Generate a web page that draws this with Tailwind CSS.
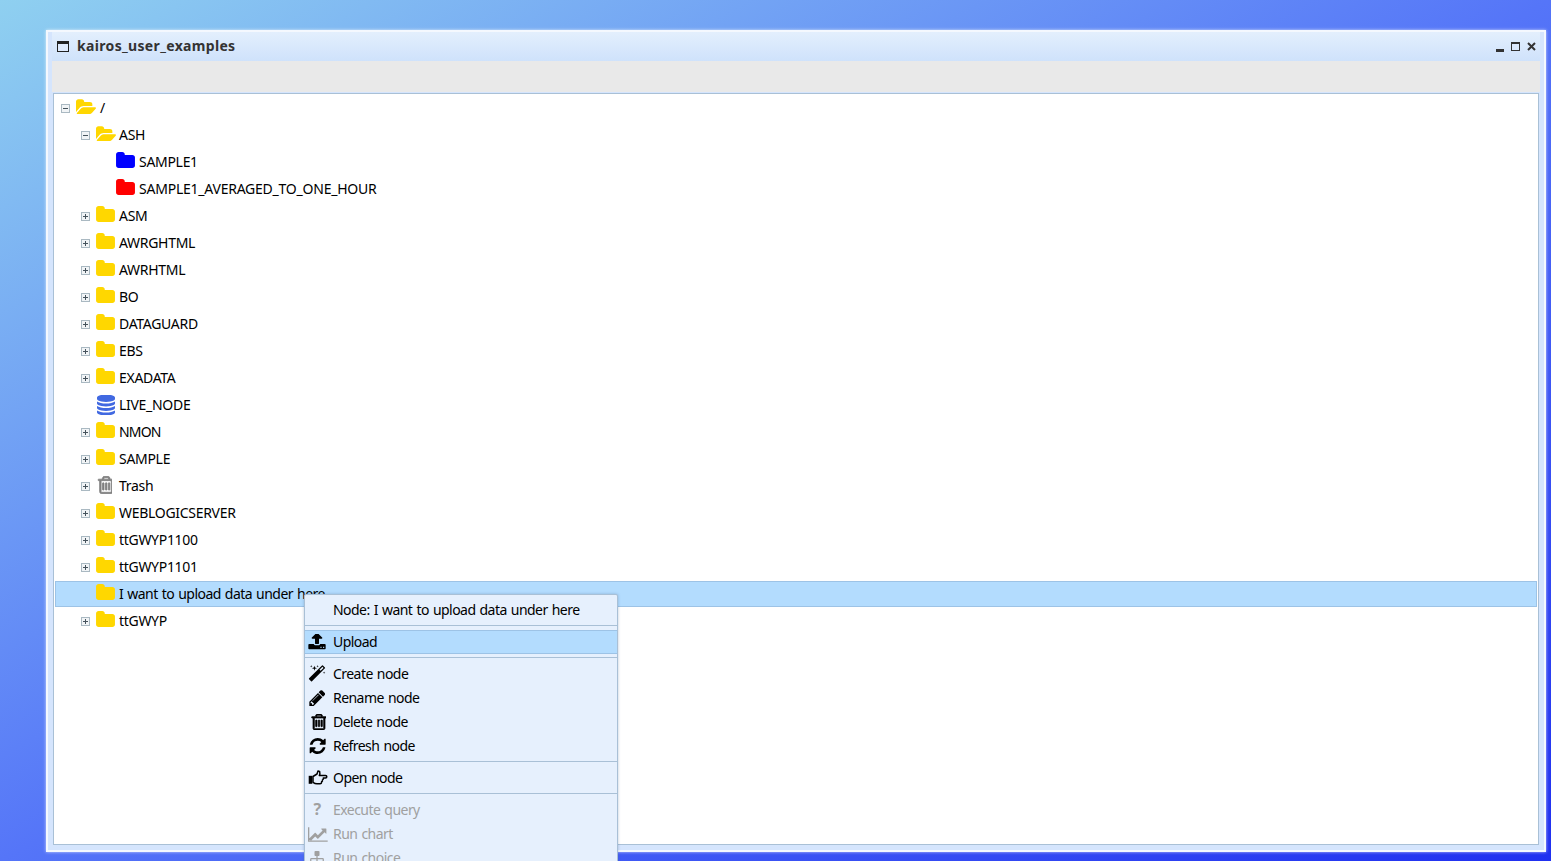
<!DOCTYPE html>
<html lang="en">
<head>
    <meta charset="UTF-8">
    <meta name="viewport" content="width=device-width, initial-scale=1.0">
    <script src="https://cdn.jsdelivr.net/npm/@tailwindcss/browser@4"></script>
    <title>kairos_user_examples</title>
</head>
<body class="h-screen overflow-hidden bg-[linear-gradient(to_bottom_right,#8fd0f0_0%,#5575f8_50%,#2030f0_100%)] font-['Noto_Sans',sans-serif] text-[14px] tracking-[-0.3px] text-black">

    <!-- Icon set -->
    <svg class="hidden">
        <symbol id="i-folder" viewBox="0 112 1664 1408"><path fill="currentColor" d="M1664 592v704q0 92-66 158t-158 66h-1216q-92 0-158-66t-66-158v-960q0-92 66-158t158-66h320q92 0 158 66t66 158v32h672q92 0 158 66t66 158z"/></symbol>
        <symbol id="i-folder-open" viewBox="0 112 1879 1408"><path fill="currentColor" d="M1879 952q0 31-31 66l-336 396q-43 51-120.5 86.5t-143.5 35.5h-1088q-34 0-60.5-13t-26.5-43q0-31 31-66l336-396q43-51 120.5-86.5t143.5-35.5h1088q34 0 60.5 13t26.5 43zm-343-344v160h-832q-94 0-197 47.5t-164 119.5l-337 396-5 6q0-4-.5-12.5t-.5-12.5v-960q0-92 66-158t158-66h320q92 0 158 66t66 158v32h544q92 0 158 66t66 158z"/></symbol>
        <symbol id="i-database" viewBox="0 128 1536 1536"><path fill="currentColor" d="M768 768q237 0 443-43t325-127v170q0 69-103 128t-280 93.5-385 34.5-385-34.5-280-93.5-103-128v-170q119 84 325 127t443 43zm0 768q237 0 443-43t325-127v170q0 69-103 128t-280 93.5-385 34.5-385-34.5-280-93.5-103-128v-170q119 84 325 127t443 43zm0-384q237 0 443-43t325-127v170q0 69-103 128t-280 93.5-385 34.5-385-34.5-280-93.5-103-128v-170q119 84 325 127t443 43zm0-1152q208 0 385 34.5t280 93.5 103 128v128q0 69-103 128t-280 93.5-385 34.5-385-34.5-280-93.5-103-128v-128q0-69 103-128t280-93.5 385-34.5z"/></symbol>
        <symbol id="i-trash" viewBox="0 128 1408 1536"><path fill="currentColor" stroke="currentColor" stroke-width="70" d="M704 736v576q0 14-9 23t-23 9h-64q-14 0-23-9t-9-23v-576q0-14 9-23t23-9h64q14 0 23 9t9 23zm256 0v576q0 14-9 23t-23 9h-64q-14 0-23-9t-9-23v-576q0-14 9-23t23-9h64q14 0 23 9t9 23zm256 0v576q0 14-9 23t-23 9h-64q-14 0-23-9t-9-23v-576q0-14 9-23t23-9h64q14 0 23 9t9 23zm128 724v-948h-896v948q0 22 7 40.5t14.5 27 10.5 8.5h832q3 0 10.5-8.5t14.5-27 7-40.5zm-672-1076h448l-48-117q-7-9-17-11h-317q-10 2-17 11zm928 32v64q0 14-9 23t-23 9h-96v948q0 83-47 143.5t-113 60.5h-832q-66 0-113-58.5t-47-141.5v-952h-96q-14 0-23-9t-9-23v-64q0-14 9-23t23-9h309l70-167q15-37 54-63t79-26h320q40 0 79 26t54 63l70 167h309q14 0 23 9t9 23z"/></symbol>
        <symbol id="i-upload" viewBox="0 128 1664 1536"><path fill="currentColor" d="M1280 1408q0-26-19-45t-45-19-45 19-19 45 19 45 45 19 45-19 19-45zm256 0q0-26-19-45t-45-19-45 19-19 45 19 45 45 19 45-19 19-45zm128-224v320q0 40-28 68t-68 28h-1472q-40 0-68-28t-28-68v-320q0-40 28-68t68-28h427q21 56 70.5 92t110.5 36h256q61 0 110.5-36t70.5-92h427q40 0 68 28t28 68zm-325-648q-17 40-59 40h-256v448q0 26-19 45t-45 19h-256q-26 0-45-19t-19-45v-448h-256q-42 0-59-40-17-39 14-69l448-448q18-19 45-19t45 19l448 448q31 30 14 69z"/></symbol>
        <symbol id="i-magic" viewBox="0 0 1792 1792"><path fill="currentColor" d="M1254 581l293-293-107-107-293 293zm447-293q0 27-18 45l-1286 1286q-18 18-45 18t-45-18l-198-198q-18-18-18-45t18-45l1286-1286q18-18 45-18t45 18l198 198q18 18 18 45zm-1351-190l98 30-98 30-30 98-30-98-98-30 98-30 30-98zm350 162l196 60-196 60-60 196-60-196-196-60 196-60 60-196zm930 478l98 30-98 30-30 98-30-98-98-30 98-30 30-98zm-640-640l98 30-98 30-30 98-30-98-98-30 98-30 30-98z"/></symbol>
        <symbol id="i-pencil" viewBox="0 128 1536 1536"><path fill="currentColor" d="M491 1536l91-91-235-235-91 91v107h128v128h107zm523-928q0-22-22-22-10 0-17 7l-542 542q-7 7-7 17 0 22 22 22 10 0 17-7l542-542q7-7 7-17zm-54-192l416 416-832 832h-416v-416zm683 96q0 53-37 90l-166 166-416-416 166-165q36-38 90-38 53 0 91 38l235 234q37 39 37 91z"/></symbol>
        <symbol id="i-refresh" viewBox="0 128 1664 1536"><path fill="currentColor" d="M1639 1056q0 5-1 7-64 268-268 434.5t-478 166.5q-146 0-282.5-55t-243.5-157l-129 129q-19 19-45 19t-45-19-19-45v-448q0-26 19-45t45-19h448q26 0 45 19t19 45-19 45l-137 137q71 66 161 102t187 36q134 0 250-65t186-179q11-17 53-117 8-23 30-23h192q13 0 22.5 9.5t9.5 22.5zm25-800v448q0 26-19 45t-45 19h-448q-26 0-45-19t-19-45 19-45l138-138q-148-137-349-137-134 0-250 65t-186 179q-11 17-53 117-8 23-30 23h-199q-13 0-22.5-9.5t-9.5-22.5v-7q65-268 270-434.5t480-166.5q146 0 284 55.5t245 156.5l130-129q19-19 45-19t45 19 19 45z"/></symbol>
        <symbol id="i-hand" viewBox="0 0 20 16"><path fill="none" stroke="currentColor" stroke-width="1.5" stroke-linejoin="round" d="M5 6.5l4-2.5 1-3 1.6.4.3 2.6-.6 1.5h6.2q1.3 0 1.3 1.2t-1.3 1.2h-2.2q.4 1.6-.8 2 .3 1.5-.9 1.9.1 1.9-1.6 1.9H9q-2 0-4-1.4z"/><path fill="currentColor" d="M0.7 5.8h3.6v8H0.7z"/></symbol>
        <symbol id="i-chart" viewBox="0 192 2048 1408"><path fill="currentColor" d="M1920 1472v128h-1920v-1408h128v1280h1792zm-128-1120v435q0 21-19.5 29.5t-35.5-7.5l-121-121-633 633q-10 10-23 10t-23-10l-233-233-416 416-192-192 585-585q10-10 23-10t23 10l233 233 464-464-121-121q-16-16-7.5-35.5t29.5-19.5h435q14 0 23 9t9 23z"/></symbol>
        <symbol id="i-sitemap" viewBox="0 128 1792 1536"><path fill="currentColor" d="M1792 1248v320q0 40-28 68t-68 28h-320q-40 0-68-28t-28-68v-320q0-40 28-68t68-28h96v-192h-512v192h96q40 0 68 28t28 68v320q0 40-28 68t-68 28h-320q-40 0-68-28t-28-68v-320q0-40 28-68t68-28h96v-192h-512v192h96q40 0 68 28t28 68v320q0 40-28 68t-68 28h-320q-40 0-68-28t-28-68v-320q0-40 28-68t68-28h96v-192q0-52 38-90t90-38h512v-192h-96q-40 0-68-28t-28-68v-320q0-40 28-68t68-28h320q40 0 68 28t28 68v320q0 40-28 68t-68 28h-96v192h512q52 0 90 38t38 90v192h96q40 0 68 28t28 68z"/></symbol>
        <symbol id="i-plus" viewBox="0 0 9 9"><rect x=".5" y=".5" width="8" height="8" fill="#f1f4f6" stroke="#aab9c2"/><path d="M2 4.5h5M4.5 2v5" stroke="#46535c"/></symbol>
        <symbol id="i-minus" viewBox="0 0 9 9"><rect x=".5" y=".5" width="8" height="8" fill="#f1f4f6" stroke="#aab9c2"/><path d="M2 4.5h5" stroke="#46535c"/></symbol>
    </svg>

    <!-- Window -->
    <div class="relative mt-[30px] ml-[46px] flex h-[822px] w-[1500px] flex-col border-2 border-[#f4f8fe] bg-[#d5e5fd] px-1 pb-[5px] shadow-[0_0_3px_rgba(255,255,255,0.7)]">

        <!-- Title bar -->
        <div class="flex h-[29px] shrink-0 items-center bg-[linear-gradient(#e3effd,#cfe2fb)] pl-[5px] text-[#333]">
            <svg class="h-[11px] w-[12px]" viewBox="0 0 12 11"><path d="M0 0h12v11H0z" fill="#222"/><path d="M1 3h10v7H1z" fill="#dfebfd"/></svg>
            <span class="mb-[2px] ml-2 text-[14px] font-bold tracking-[0.33px]">kairos_user_examples</span>
            <div class="ml-auto flex items-center pr-[4px]">
                <svg class="mt-[7px] h-[3px] w-[8px]" viewBox="0 0 8 3"><path d="M0 0h8v3H0z" fill="#333"/></svg>
                <svg class="ml-[7px] h-[9px] w-[9px]" viewBox="0 0 9 9"><path d="M0 0h9v9H0z" fill="#333"/><path d="M1 2h7v6H1z" fill="#dbe9fd"/></svg>
                <svg class="ml-[7px] h-[9px] w-[9px]" viewBox="0 0 9 9"><path d="M1 1l7 7M8 1L1 8" stroke="#333" stroke-width="2"/></svg>
            </div>
        </div>

        <!-- Toolbar -->
        <div class="mb-px h-[31px] shrink-0 bg-[#e9e9e9]"></div>

        <!-- Tree panel -->
        <div class="mx-px flex-1 border border-[#a9c0d6] bg-white pt-px pr-px pl-px">

            <div class="flex h-[27px] items-center pl-[6px]">
                <svg class="h-[9px] w-[9px]"><use href="#i-minus"/></svg>
                <svg class="mb-[5px] ml-[6px] h-[15px] w-[20px] text-[#ffd700]"><use href="#i-folder-open"/></svg>
                <span class="mb-[2px] ml-1">/</span>
            </div>
            <div class="flex h-[27px] items-center pl-[26px]">
                <svg class="h-[9px] w-[9px]"><use href="#i-minus"/></svg>
                <svg class="mb-[5px] ml-[6px] h-[15px] w-[20px] text-[#ffd700]"><use href="#i-folder-open"/></svg>
                <span class="mb-[2px] ml-[3px]">ASH</span>
            </div>
            <div class="flex h-[27px] items-center pl-[61px]">
                <svg class="mb-[5px] h-[16px] w-[19px] text-[#0000ff]"><use href="#i-folder"/></svg>
                <span class="mb-[2px] ml-[4px]">SAMPLE1</span>
            </div>
            <div class="flex h-[27px] items-center pl-[61px]">
                <svg class="mb-[5px] h-[16px] w-[19px] text-[#ff0000]"><use href="#i-folder"/></svg>
                <span class="mb-[2px] ml-[4px] tracking-[-0.23px]">SAMPLE1_AVERAGED_TO_ONE_HOUR</span>
            </div>
            <div class="flex h-[27px] items-center pl-[26px]">
                <svg class="h-[9px] w-[9px]"><use href="#i-plus"/></svg>
                <svg class="mb-[5px] ml-[6px] h-[16px] w-[19px] text-[#ffd700]"><use href="#i-folder"/></svg>
                <span class="mb-[2px] ml-[4px]">ASM</span>
            </div>
            <div class="flex h-[27px] items-center pl-[26px]">
                <svg class="h-[9px] w-[9px]"><use href="#i-plus"/></svg>
                <svg class="mb-[5px] ml-[6px] h-[16px] w-[19px] text-[#ffd700]"><use href="#i-folder"/></svg>
                <span class="mb-[2px] ml-[4px]">AWRGHTML</span>
            </div>
            <div class="flex h-[27px] items-center pl-[26px]">
                <svg class="h-[9px] w-[9px]"><use href="#i-plus"/></svg>
                <svg class="mb-[5px] ml-[6px] h-[16px] w-[19px] text-[#ffd700]"><use href="#i-folder"/></svg>
                <span class="mb-[2px] ml-[4px]">AWRHTML</span>
            </div>
            <div class="flex h-[27px] items-center pl-[26px]">
                <svg class="h-[9px] w-[9px]"><use href="#i-plus"/></svg>
                <svg class="mb-[5px] ml-[6px] h-[16px] w-[19px] text-[#ffd700]"><use href="#i-folder"/></svg>
                <span class="mb-[2px] ml-[4px]">BO</span>
            </div>
            <div class="flex h-[27px] items-center pl-[26px]">
                <svg class="h-[9px] w-[9px]"><use href="#i-plus"/></svg>
                <svg class="mb-[5px] ml-[6px] h-[16px] w-[19px] text-[#ffd700]"><use href="#i-folder"/></svg>
                <span class="mb-[2px] ml-[4px]">DATAGUARD</span>
            </div>
            <div class="flex h-[27px] items-center pl-[26px]">
                <svg class="h-[9px] w-[9px]"><use href="#i-plus"/></svg>
                <svg class="mb-[5px] ml-[6px] h-[16px] w-[19px] text-[#ffd700]"><use href="#i-folder"/></svg>
                <span class="mb-[2px] ml-[4px]">EBS</span>
            </div>
            <div class="flex h-[27px] items-center pl-[26px]">
                <svg class="h-[9px] w-[9px]"><use href="#i-plus"/></svg>
                <svg class="mb-[5px] ml-[6px] h-[16px] w-[19px] text-[#ffd700]"><use href="#i-folder"/></svg>
                <span class="mb-[2px] ml-[4px]">EXADATA</span>
            </div>
            <div class="flex h-[27px] items-center pl-[42px]">
                <svg class="mb-[2px] h-[20px] w-[18px] text-[#4169e1]"><use href="#i-database"/></svg>
                <span class="mb-[2px] ml-[4px]">LIVE_NODE</span>
            </div>
            <div class="flex h-[27px] items-center pl-[26px]">
                <svg class="h-[9px] w-[9px]"><use href="#i-plus"/></svg>
                <svg class="mb-[5px] ml-[6px] h-[16px] w-[19px] text-[#ffd700]"><use href="#i-folder"/></svg>
                <span class="mb-[2px] ml-[4px] tracking-[-0.8px]">NMON</span>
            </div>
            <div class="flex h-[27px] items-center pl-[26px]">
                <svg class="h-[9px] w-[9px]"><use href="#i-plus"/></svg>
                <svg class="mb-[5px] ml-[6px] h-[16px] w-[19px] text-[#ffd700]"><use href="#i-folder"/></svg>
                <span class="mb-[2px] ml-[4px]">SAMPLE</span>
            </div>
            <div class="flex h-[27px] items-center pl-[26px]">
                <svg class="h-[9px] w-[9px]"><use href="#i-plus"/></svg>
                <svg class="mb-[3px] ml-[6px] h-[18px] w-[16px] text-[#808080]"><use href="#i-trash"/></svg>
                <span class="mb-[2px] ml-[7px]">Trash</span>
            </div>
            <div class="flex h-[27px] items-center pl-[26px]">
                <svg class="h-[9px] w-[9px]"><use href="#i-plus"/></svg>
                <svg class="mb-[5px] ml-[6px] h-[16px] w-[19px] text-[#ffd700]"><use href="#i-folder"/></svg>
                <span class="mb-[2px] ml-[4px]">WEBLOGICSERVER</span>
            </div>
            <div class="flex h-[27px] items-center pl-[26px]">
                <svg class="h-[9px] w-[9px]"><use href="#i-plus"/></svg>
                <svg class="mb-[5px] ml-[6px] h-[16px] w-[19px] text-[#ffd700]"><use href="#i-folder"/></svg>
                <span class="mb-[2px] ml-[4px]">ttGWYP1100</span>
            </div>
            <div class="flex h-[27px] items-center pl-[26px]">
                <svg class="h-[9px] w-[9px]"><use href="#i-plus"/></svg>
                <svg class="mb-[5px] ml-[6px] h-[16px] w-[19px] text-[#ffd700]"><use href="#i-folder"/></svg>
                <span class="mb-[2px] ml-[4px]">ttGWYP1101</span>
            </div>
            <div class="mb-px flex h-[26px] items-center border border-[#9dc3e6] bg-[#b3dcfe] pl-[40px]">
                <svg class="mb-[5px] h-[16px] w-[19px] text-[#ffd700]"><use href="#i-folder"/></svg>
                <span class="mb-[2px] ml-[4px] tracking-[-0.55px] [word-spacing:1px]">I want to upload data under here</span>
            </div>
            <div class="flex h-[27px] items-center pl-[26px]">
                <svg class="h-[9px] w-[9px]"><use href="#i-plus"/></svg>
                <svg class="mb-[5px] ml-[6px] h-[16px] w-[19px] text-[#ffd700]"><use href="#i-folder"/></svg>
                <span class="mb-[2px] ml-[4px]">ttGWYP</span>
            </div>
        </div>

        <!-- Context menu -->
        <div class="absolute top-[562px] left-[256px] w-[314px] rounded-[2px] border border-[#a9c0d6] bg-[#e6f0fd] pt-[3px] tracking-[-0.55px] [word-spacing:1px] shadow-[0_0_3px_rgba(80,110,150,0.4)]">
            <div class="flex h-6 items-center pb-[2px] pl-[28px]">Node: I want to upload data under here</div>
            <div class="mt-[3px] mb-1 h-px bg-[#a9c0d6]"></div>
            <div class="flex h-6 items-center border-y border-[#9dc3e6] bg-[#b3dcfe] pl-[3px]">
                <svg class="h-4 w-[18px]"><use href="#i-upload"/></svg>
                <span class="mb-[2px] ml-[7px]">Upload</span>
            </div>
            <div class="mt-[3px] mb-1 h-px bg-[#a9c0d6]"></div>
            <div class="flex h-6 items-center pl-[3px]">
                <svg class="h-[18px] w-[18px]"><use href="#i-magic"/></svg>
                <span class="mb-[2px] ml-[7px]">Create node</span>
            </div>
            <div class="flex h-6 items-center pl-[3px]">
                <svg class="mr-px -ml-px h-4 w-[18px]"><use href="#i-pencil"/></svg>
                <span class="mb-[2px] ml-[7px]">Rename node</span>
            </div>
            <div class="flex h-6 items-center pl-[3px]">
                <svg class="h-4 w-[18px]"><use href="#i-trash"/></svg>
                <span class="mb-[2px] ml-[7px]">Delete node</span>
            </div>
            <div class="flex h-6 items-center pl-[3px]">
                <svg class="h-4 w-[18px]"><use href="#i-refresh"/></svg>
                <span class="mb-[2px] ml-[7px]">Refresh node</span>
            </div>
            <div class="mt-[3px] mb-1 h-px bg-[#a9c0d6]"></div>
            <div class="flex h-6 items-center pl-[3px]">
                <svg class="h-4 w-[20px]"><use href="#i-hand"/></svg>
                <span class="mb-[2px] ml-[5px]">Open node</span>
            </div>
            <div class="mt-[3px] mb-1 h-px bg-[#a9c0d6]"></div>
            <div class="flex h-6 items-center pl-[3px] text-[#a0a0a0]">
                <span class="mb-[2px] w-[18px] text-center text-[16px] font-bold">?</span>
                <span class="mb-[2px] ml-[7px]">Execute query</span>
            </div>
            <div class="flex h-6 items-center pl-[3px] text-[#a0a0a0]">
                <svg class="h-[15px] w-[21px]"><use href="#i-chart"/></svg>
                <span class="mb-[2px] ml-[4px]">Run chart</span>
            </div>
            <div class="flex h-6 items-center pl-[3px] text-[#a0a0a0]">
                <svg class="h-[15px] w-[18px]"><use href="#i-sitemap"/></svg>
                <span class="mb-[2px] ml-[7px]">Run choice</span>
            </div>
        </div>
    </div>

</body>
</html>
